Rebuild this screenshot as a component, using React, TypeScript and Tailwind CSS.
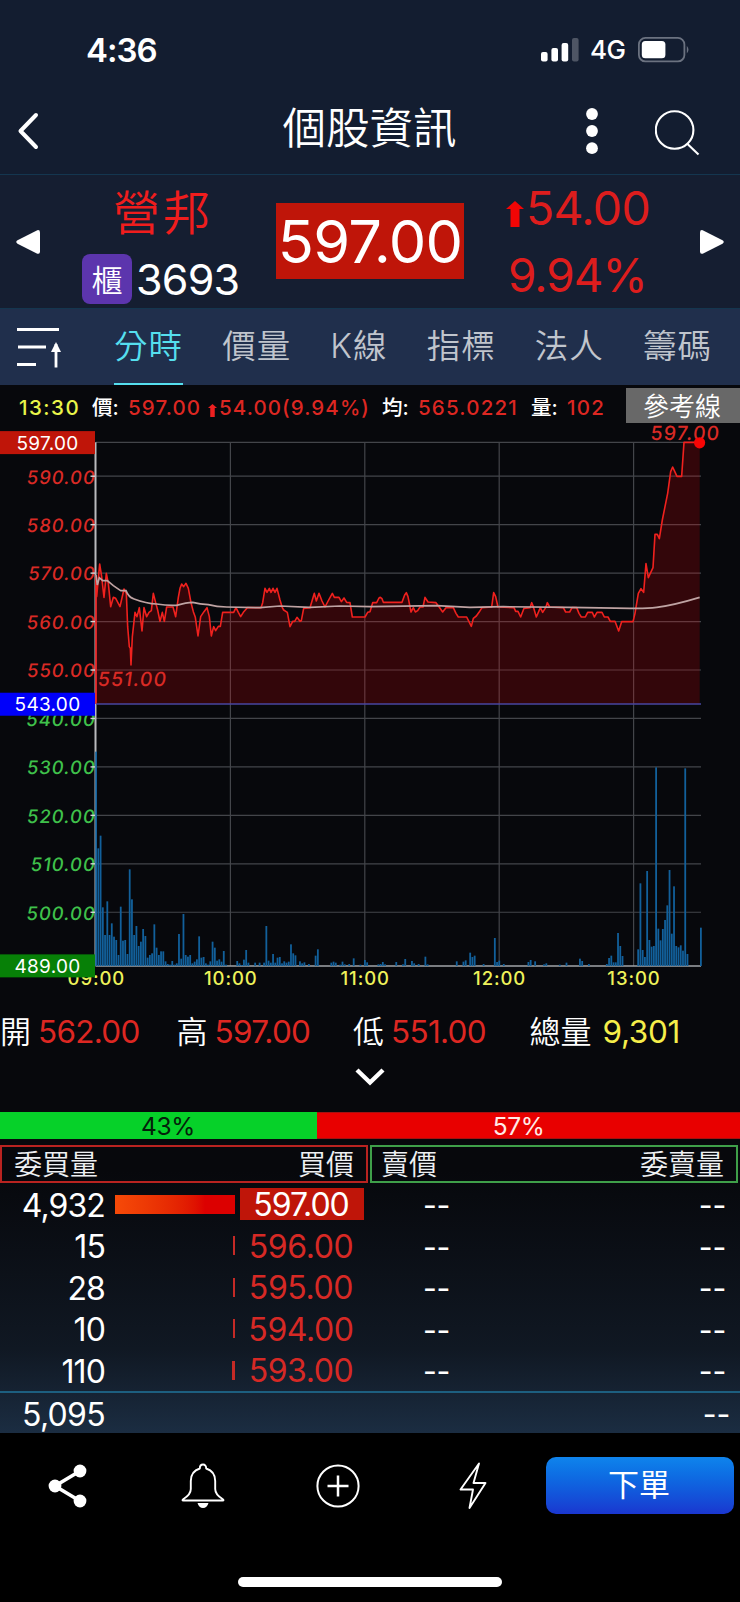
import type { ReactNode } from "react";

const TABS = ["分時", "價量", "K線", "指標", "法人", "籌碼"];

const SUMMARY = [
  { label: "開", value: "562.00", color: "text-[#dd2722] tracking-[-0.7px]" },
  { label: "高", value: "597.00", color: "text-[#dd2722] tracking-[-0.7px]" },
  { label: "低", value: "551.00", color: "text-[#dd2722] tracking-[-0.7px]" },
  { label: "總量", value: "9,301", color: "text-[#f5ee4a] tracking-[-0.3px] pl-1" },
];

const BIDS = [
  { volume: "4,932", price: "597.00", ratio: 100 },
  { volume: "15", price: "596.00", ratio: 2 },
  { volume: "28", price: "595.00", ratio: 2 },
  { volume: "10", price: "594.00", ratio: 2 },
  { volume: "110", price: "593.00", ratio: 2.5 },
];

// plot area
const LEFT = 96;
const RIGHT = 701;
const TOP = 442.3;
const BOTTOM = 966;
const MINUTE = 2.24;

const priceToY = (price: number) => TOP + (597 - price) * 4.845;
const minuteToX = (minute: number) => LEFT + minute * MINUTE;

const UP_LABELS = [590, 580, 570, 560, 550];
const DOWN_LABELS = [540, 530, 520, 510, 500];
const HOURS = ["09:00", "10:00", "11:00", "12:00", "13:00"];

// price and average lines, drawn in thirds of a pixel
const PRICE_POINTS =
  "288,590 290,650 299,552 305,590 312,652 319,580 325,610 332,680 340,652 347,655 360,680 372,627 379,640 383,740 388,800 391,805 393,855 397,770 405,697 411,710 418,683 426,753 432,683 440,710 447,697 454,692 460,640 467,668 473,690 480,724 487,697 493,724 500,681 519,681 527,710 535,652 540,625 545,612 551,620 558,610 565,625 573,668 580,695 586,712 594,768 602,710 612,695 621,683 628,710 634,768 641,740 647,752 655,739 661,739 668,697 701,697 708,683 715,697 722,710 730,697 742,683 783,683 788,668 795,625 801,637 808,625 813,637 819,625 825,637 831,625 840,660 847,683 851,690 862,697 870,740 878,724 884,724 891,712 900,724 904,722 911,685 930,683 943,640 949,663 957,640 966,663 975,681 986,660 997,640 1003,652 1017,652 1024,665 1032,654 1040,667 1050,668 1057,711 1095,711 1103,697 1110,695 1118,668 1130,668 1137,654 1141,652 1146,656 1150,667 1206,667 1214,645 1219,638 1224,650 1233,696 1240,683 1246,696 1253,692 1260,681 1269,681 1275,652 1284,666 1308,668 1318,682 1328,696 1338,683 1360,683 1368,700 1375,711 1400,711 1407,725 1414,739 1420,715 1429,708 1437,697 1446,683 1475,681 1481,638 1487,650 1494,681 1542,683 1547,694 1554,694 1562,711 1572,685 1590,683 1595,668 1600,680 1609,711 1621,683 1628,697 1637,683 1642,668 1649,681 1690,683 1697,696 1709,696 1716,683 1730,683 1737,700 1744,711 1756,711 1763,697 1777,697 1783,711 1791,697 1806,697 1813,711 1824,711 1831,724 1845,724 1856,753 1865,725 1899,725 1905,700 1915,640 1923,626 1931,637 1938,551 1945,593 1959,563 1965,463 1972,463 1978,476 1987,420 2003,340 2012,275 2018,261 2023,272 2031,289 2045,289 2052,187 2099,187";
const AVERAGE_PATH =
  "M288,585 L292,615 L298,593 L308,602 L322,602 L340,617 Q350,624 362,632 L378,632 Q386,652 400,656 Q440,671 470,672 Q500,677 530,676 Q560,667 578,667 Q600,673 625,674 Q650,681 680,681 L780,683 L840,678 L930,682 L1020,678 L1110,680 L1310,677 L1410,682 L1510,680 L1710,682 L1890,685 Q1940,686 1970,682 Q2020,676 2099,652";

// [minute, volume]
const VOLUMES: [number, number][] = [
  [0, 643], [1, 353], [2, 391], [3, 176], [4, 93], [5, 194], [6, 93], [7, 128], [8, 88], [9, 78],
  [10, 33], [11, 178], [12, 76], [13, 78], [14, 36], [15, 290], [16, 200], [17, 93], [18, 120], [19, 60],
  [20, 73], [21, 111], [22, 90], [23, 25], [24, 33], [25, 38], [26, 125], [27, 55], [28, 33], [29, 44],
  [30, 44], [31, 14], [32, 6], [33, 4], [34, 15], [35, 4], [36, 8], [37, 96], [38, 22], [39, 156],
  [40, 33], [41, 28], [42, 33], [43, 8], [44, 13], [45, 20], [46, 89], [47, 25], [48, 27], [49, 8],
  [50, 4], [51, 14], [52, 73], [53, 55], [54, 16], [55, 20], [56, 13], [57, 45], [58, 4], [63, 15],
  [64, 8], [65, 3], [66, 19], [67, 48], [68, 10], [71, 10], [73, 10], [75, 10], [76, 120], [77, 16],
  [78, 10], [79, 36], [80, 10], [81, 25], [82, 27], [83, 8], [84, 14], [85, 10], [86, 13], [87, 65],
  [88, 38], [89, 32], [91, 14], [92, 8], [93, 11], [95, 6], [98, 31], [99, 50], [105, 10], [106, 13],
  [107, 10], [109, 4], [110, 13], [111, 5], [113, 6], [115, 23], [118, 4], [120, 18], [121, 11],
  [126, 5], [127, 6], [128, 12], [129, 5], [134, 12], [137, 5], [138, 21], [141, 15], [142, 8],
  [144, 6], [147, 28], [148, 5], [161, 14], [164, 13], [165, 17], [167, 40], [168, 27], [169, 31],
  [173, 6], [178, 84], [179, 12], [180, 16], [182, 6], [193, 12], [194, 18], [196, 14], [200, 5],
  [201, 8], [207, 4], [210, 10], [216, 22], [217, 15], [220, 6], [228, 6], [229, 24], [230, 31],
  [231, 11], [232, 11], [233, 99], [234, 60], [235, 30], [242, 50], [243, 248], [244, 48], [245, 27],
  [246, 285], [247, 78], [248, 58], [249, 60], [250, 596], [251, 112], [252, 77], [253, 111],
  [254, 138], [255, 182], [256, 288], [257, 97], [258, 239], [259, 60], [260, 56], [261, 62],
  [262, 46], [263, 593], [264, 36], [270, 115],
];

function StatusBar() {
  return (
    <div className="flex h-[88px] items-center pt-3 pr-[48px] pl-[86px] text-white">
      <span className="text-[33px] leading-none font-semibold tracking-[-1px]">4:36</span>
      <div className="ml-auto flex items-center">
        <svg width="38" height="24" viewBox="0 0 38 24" fill="currentColor">
          <rect x="0" y="14" width="6.6" height="9.5" rx="2" />
          <rect x="10.4" y="10" width="6.6" height="13.5" rx="2" />
          <rect x="20.6" y="5" width="6.6" height="18.5" rx="2" />
          <rect x="31" y="0" width="6.6" height="23.5" rx="2" opacity=".25" />
        </svg>
        <span className="ml-[11px] w-[36px] text-[26px] leading-none font-medium tracking-[-0.5px]">
          4G
        </span>
        <svg className="ml-3" width="54" height="26" viewBox="0 0 54 26">
          <rect x=".9" y=".9" width="45.5" height="23.5" rx="6.5" fill="none" stroke="#6b7280" strokeWidth="1.8" />
          <rect x="3.8" y="4" width="23.6" height="17.3" rx="3.5" fill="#fff" />
          <path d="M48.8 8.7q3.4 3.9 0 7.8z" fill="#6b7280" />
        </svg>
      </div>
    </div>
  );
}

function TitleBar() {
  return (
    <div className="flex h-[86px] items-start justify-between pr-[39px] pl-[17px] text-white">
      <svg className="mt-[23px] w-[104px]" height="40" viewBox="0 0 104 40" fill="none">
        <path d="M19 4 L3.5 20 L19 36" stroke="currentColor" strokeWidth="4" strokeLinecap="round" strokeLinejoin="round" />
      </svg>
      <h1 className="ml-[33px] text-[43.5px] leading-[80px] font-[350]">個股資訊</h1>
      <div className="mt-4 flex">
        <svg width="14" height="54" viewBox="0 0 14 54" fill="currentColor">
          <circle cx="7" cy="10" r="5.9" />
          <circle cx="7" cy="27" r="5.9" />
          <circle cx="7" cy="44.2" r="5.9" />
        </svg>
        <svg className="ml-14" width="46" height="54" viewBox="0 0 46 54" fill="none" stroke="currentColor" strokeWidth="2.1">
          <circle cx="19.6" cy="26" r="18.8" />
          <path d="M32.5 40 L43.5 50.5" />
        </svg>
      </div>
    </div>
  );
}

function Quote() {
  return (
    <section className="flex h-[135px] border-y border-[#14364f] bg-[#151e31]">
      <div className="flex w-[80px] items-center pl-[15px]">
        <svg width="26" height="26" viewBox="0 0 26 26" fill="#fff">
          <path d="M22.3 1.2 L2.5 11.3 Q0 13 2.5 14.7 L22.3 24.7 Q25 25.5 25 22.5 V3.5 Q25 .6 22.3 1.2Z" />
        </svg>
      </div>
      <div className="flex w-[196px] flex-col">
        <p className="mt-[13px] pl-[33px] text-[47px] leading-[50px] font-[350] tracking-[3px] text-[#f01d1d]">
          營邦
        </p>
        <div className="mt-[16px] flex items-center pl-0.5">
          <span className="flex size-[50px] items-center justify-center rounded-lg bg-[#5c35ad] pt-0.5 text-[31px] leading-none font-[350] text-white">
            櫃
          </span>
          <span className="ml-1 text-[43px] leading-none tracking-[-0.8px] text-white">3693</span>
        </div>
      </div>
      <div className="mt-[28px] flex h-[76px] w-[188px] items-center justify-center bg-[#bf1509] pt-0.5 text-[59.5px] tracking-[-0.7px] text-white">
        597.00
      </div>
      <div className="flex w-[236px] flex-col pl-[42px] text-[#dd1d1d]">
        <p className="mt-[8px] flex items-center text-[46.5px] leading-[50px] tracking-[-0.7px]">
          <svg className="mt-3 mr-0.5" width="18" height="26" viewBox="0 0 18 26" fill="#f20505">
            <path d="M9 0 L18 8 H13.5 V26 H4.5 V8 H0Z" />
          </svg>
          54.00
        </p>
        <p className="mt-[17px] pl-0.5 text-[46px] leading-[50px] tracking-[-1px]">9.94%</p>
      </div>
      <div className="flex items-center">
        <svg width="26" height="26" viewBox="0 0 26 26" fill="#fff">
          <path d="M2.7 1.2 L22.5 11.3 Q25 13 22.5 14.7 L2.7 24.7 Q0 25.5 0 22.5 V3.5 Q0 .6 2.7 1.2Z" />
        </svg>
      </div>
    </section>
  );
}

function Tabs() {
  return (
    <nav className="flex h-[76px] items-stretch bg-[#202f4c] pr-7 pl-4">
      <svg className="mt-[17px] mr-[53px] shrink-0" width="45" height="46" viewBox="0 0 45 46" fill="none" stroke="#fff" strokeWidth="2.8">
        <path d="M1 3.5 H43 M2 21 H30 M1 38.5 H20 M40 18 V41.5" />
        <path d="M40 16 L45 26 H35Z" fill="#fff" stroke="none" />
      </svg>
      <div className="flex flex-1 justify-between">
        {TABS.map((tab, index) => (
          <button
            key={tab}
            type="button"
            className={`h-full border-b-2 pt-0.5 text-[33.5px] leading-none font-[350] tracking-[1px] ${
              index === 0 ? "border-[#55dfee] text-[#55dfee]" : "border-transparent text-[#c0c5cd]"
            }`}
          >
            {tab}
          </button>
        ))}
      </div>
    </nav>
  );
}

function InfoRow() {
  return (
    <div className="flex h-[38px] items-start pl-[19px] text-[20.5px] leading-none font-medium whitespace-nowrap text-[#dd2722]">
      <span className="w-[73px] pt-[13px] tracking-[1.5px] text-[#e9f54a]">13:30</span>
      <span className="w-9 pt-[13px] text-white">價:</span>
      <span className="w-[80px] pt-[13px] tracking-[1.1px]">597.00</span>
      <svg className="mt-[19px] mr-0.5" width="9" height="13" viewBox="0 0 18 26" fill="#ee2020">
        <path d="M9 0 L18 8 H13.5 V26 H4.5 V8 H0Z" />
      </svg>
      <span className="w-[163px] pt-[13px] tracking-[1.1px]">54.00(9.94%)</span>
      <span className="w-9 pt-[13px] text-white">均:</span>
      <span className="w-[113px] pt-[13px] tracking-[1.2px]">565.0221</span>
      <span className="w-9 pt-[13px] text-white">量:</span>
      <span className="pt-[13px] tracking-[1.2px]">102</span>
      <button type="button" className="mt-[3px] ml-auto h-[35px] w-[114px] bg-[#686868] pt-0.5 pr-0.5 text-[26px] leading-none font-[350] text-white">
        參考線
      </button>
    </div>
  );
}

function PriceTag({ price, fill }: { price: number; fill: string }) {
  const y = priceToY(price);
  return (
    <g>
      <rect x="0" y={y - 11.2} width="95" height="23" fill={fill} />
      <text x="47.5" y={y + 7.5} textAnchor="middle" fill="#fff" className="text-[19px] tracking-[0.3px]">
        {price.toFixed(2)}
      </text>
    </g>
  );
}

function Chart() {
  return (
    <svg className="block" width="740" height="567" viewBox="0 423 740 567">
      <g stroke="#43454a" strokeWidth="1.2">
        <path d={`M${LEFT} ${TOP} H${RIGHT}`} />
        {[...UP_LABELS, ...DOWN_LABELS].map((price) => (
          <path key={price} d={`M${LEFT} ${priceToY(price)} H${RIGHT}`} />
        ))}
        {[60, 120, 180, 240].map((minute) => (
          <path key={minute} d={`M${minuteToX(minute)} ${TOP} V${BOTTOM}`} />
        ))}
      </g>

      <path d={`M95.5 ${TOP} V${BOTTOM}`} stroke="#b9babd" strokeWidth="2" />
      <path d={`M95.5 ${BOTTOM} H${RIGHT}`} stroke="#a2a4a8" strokeWidth="1.6" />
      <path d="M96 575 V704" stroke="#e02626" strokeWidth="1.8" />

      {VOLUMES.map(([minute, volume]) => (
        <rect
          key={minute}
          x={minuteToX(minute) - 0.8}
          y={BOTTOM - volume / 3}
          width="1.8"
          height={volume / 3}
          fill="#12609b"
        />
      ))}

      <g transform="translate(0 380) scale(.33333)" fill="none">
        <path d={`M${PRICE_POINTS} 2099,972 288,972Z`} fill="#ff0008" fillOpacity=".18" />
        <polyline points={PRICE_POINTS} stroke="#f0211e" strokeWidth="4.8" strokeLinejoin="round" />
        <path d={AVERAGE_PATH} stroke="#bfa3a3" strokeWidth="5" />
      </g>
      <path d={`M${LEFT} 704 H${RIGHT}`} stroke="#4846a0" strokeWidth="1.6" />

      {/* skewed by hand, the italic face has narrower figures */}
      <g className="text-[18.5px] font-medium tracking-[0.9px]" textAnchor="end">
        {UP_LABELS.map((price) => (
          <text key={price} transform={`translate(95 ${priceToY(price) + 7.3}) skewX(-8)`} fill="#d92a25">
            {price.toFixed(2)}
          </text>
        ))}
        {DOWN_LABELS.map((price) => (
          <text key={price} transform={`translate(95 ${priceToY(price) + 7.3}) skewX(-8)`} fill="#3fc14b">
            {price.toFixed(2)}
          </text>
        ))}
      </g>
      {[...UP_LABELS, ...DOWN_LABELS].map((price) => (
        <path key={price} d={`M90.5 ${priceToY(price)} H95`} stroke="#d5d5d5" strokeWidth="1.4" />
      ))}

      <g className="text-[18.5px] font-medium tracking-[0.9px]" textAnchor="middle" fill="#eef25a">
        {HOURS.map((hour, index) => (
          <text key={hour} x={minuteToX(index * 60) + 0.4} y="984.5">
            {hour}
          </text>
        ))}
      </g>

      <PriceTag price={597} fill="#bf1509" />
      <PriceTag price={543} fill="#0000fa" />
      <PriceTag price={489} fill="#078007" />

      <g className="text-[19.5px] font-medium tracking-[1.1px]" fill="#d92a25">
        <text transform="translate(97 685.5) skewX(-8)">551.00</text>
        <text transform="translate(650 440) skewX(-5)">597.00</text>
      </g>
      <circle cx="699.6" cy="442.8" r="5.6" fill="#f80505" />
    </svg>
  );
}

function Summary() {
  return (
    <div className="flex h-[122px] flex-col items-center">
      <div className="mt-[23px] flex w-full items-center text-[31.5px] leading-[38px]">
        {SUMMARY.map((item) => (
          <div key={item.label} className="flex w-[176.5px] shrink-0 items-center whitespace-nowrap">
            <span className="mr-[7px] text-[31px] font-[350] text-white">{item.label}</span>
            <span className={item.color}>{item.value}</span>
          </div>
        ))}
      </div>
      <svg className="mt-4" width="32" height="22" viewBox="0 0 32 22" fill="none">
        <path d="M3 3 L16 15.5 L29 3" stroke="#fff" strokeWidth="4.4" />
      </svg>
    </div>
  );
}

function RatioBar() {
  return (
    <div className="flex h-[27px] text-[24.5px] leading-[29px]">
      <div className="w-[317px] bg-[#06d129] pl-[19px] text-center tracking-[-0.4px] text-[#04210a]">43%</div>
      <div className="flex-1 border-y border-[#a51010] bg-[#e80000] pr-[20px] text-center leading-[27px] tracking-[-0.4px] text-[#ffe9e6]">
        57%
      </div>
    </div>
  );
}

function HeadCell({ color, children }: { color: string; children: ReactNode }) {
  return (
    <div className={`flex h-[38px] w-[368px] items-center justify-between border-2 px-3 pt-0.5 text-[28px] leading-none font-[350] text-[#eef0f3] ${color}`}>
      {children}
    </div>
  );
}

function Dashes() {
  return <span className="block text-[30px] leading-none tracking-[-0.2px]">--</span>;
}

function OrderBook() {
  return (
    <section>
      <div className="mt-[6px] flex gap-0.5">
        <HeadCell color="border-[#b92320]">
          <span>委買量</span>
          <span>買價</span>
        </HeadCell>
        <HeadCell color="border-[#3f9f49]">
          <span className="-ml-[3px]">賣價</span>
          <span>委賣量</span>
        </HeadCell>
      </div>
      {BIDS.map((bid, index) => (
        <div key={bid.price} className="flex h-[41.5px] items-center pt-px text-[32px] leading-none text-white">
          <span className="w-[105px] pt-[3px] text-right tracking-[-0.9px]">{bid.volume}</span>
          <div className="ml-2.5 flex h-[19px] w-[120px] justify-end">
            <div
              className={index === 0 ? "bg-linear-to-r from-[#f64a08] to-[#dc0000] to-75%" : "bg-[#c52a26]"}
              style={{ width: `${bid.ratio}%` }}
            />
          </div>
          <span
            className={`ml-[5px] flex h-8 w-[124px] items-center justify-center pt-0.5 pr-0.5 ${
              index === 0 ? "bg-[#bf1509] tracking-[-1px] text-white" : "tracking-[-0.4px] text-[#d62925]"
            }`}
          >
            {bid.price}
          </span>
          <span className="ml-[59px] pt-0.5">
            <Dashes />
          </span>
          <span className="mr-[14px] ml-auto pt-0.5">
            <Dashes />
          </span>
        </div>
      ))}
      <div className="flex h-[41px] items-center border-t-2 border-[#1d5f80] text-[32px] leading-none text-white">
        <span className="w-[105px] pt-[6px] text-right tracking-[-0.7px]">5,095</span>
        <span className="mr-[10px] ml-auto pt-1">
          <Dashes />
        </span>
      </div>
    </section>
  );
}

function BottomBar() {
  return (
    <footer className="flex h-[169px] flex-col bg-black">
      <div className="mt-6 flex h-[57px] items-center pr-1.5">
        <div className="flex w-[546px] items-center text-white">
          <svg className="ml-[46px]" width="44" height="46" viewBox="0 0 44 46" fill="currentColor">
            <path d="M34 8 L9 23 L34 38" fill="none" stroke="currentColor" strokeWidth="3.6" />
            <circle cx="34" cy="8" r="6.4" />
            <circle cx="9" cy="23" r="6.4" />
            <circle cx="34" cy="38" r="6.4" />
          </svg>
          <svg className="ml-[90px]" width="46" height="46" viewBox="0 0 46 46" fill="none" stroke="currentColor" strokeWidth="1.9" strokeLinejoin="round">
            <path d="M23 1.5 C21 1.5 19.8 3 19.8 5.5 C13.5 7.5 10.8 12 10.8 18 V26 C10.8 31 7.5 33.5 3.5 36 Q1.5 37.5 3.5 37.5 H42.5 Q44.5 37.5 42.5 36 C38.5 33.5 35.2 31 35.2 26 V18 C35.2 12 32.5 7.5 26.2 5.5 C26.2 3 25 1.5 23 1.5Z" />
            <path d="M17.5 40 H28.5 Q27 45 23 45 Q19 45 17.5 40Z" fill="currentColor" stroke="none" />
          </svg>
          <svg className="ml-[89px]" width="46" height="46" viewBox="0 0 46 46" fill="none" stroke="currentColor">
            <circle cx="23" cy="23" r="20.6" strokeWidth="2" />
            <path d="M12.5 23 H33.5 M23 12.5 V33.5" strokeWidth="2.5" />
          </svg>
          <svg className="ml-[97px]" width="30" height="50" viewBox="0 0 30 50" fill="none" stroke="currentColor" strokeWidth="1.9" strokeLinejoin="round">
            <path d="M21 2.5 L2.5 28.5 H15 L11.5 47 L27.5 22 H15.5Z" />
          </svg>
        </div>
        <button type="button" className="h-[57px] flex-1 rounded-[10px] bg-linear-to-b from-[#0f84ec] to-[#1a36d0] pr-0.5 pb-0.5 text-[31px] leading-none font-normal text-white">
          下單
        </button>
      </div>
      <div className="mx-auto mt-[63px] h-2.5 w-[264px] rounded-full bg-white" />
    </footer>
  );
}

export default function App() {
  return (
    <div className="flex h-[1602px] w-[740px] flex-col overflow-hidden bg-[#131d30] font-[Inter,'Noto_Sans_CJK_TC',sans-serif]">
      <StatusBar />
      <TitleBar />
      <Quote />
      <Tabs />
      <main className="h-[1048px] bg-linear-to-b from-[#07080c] from-75% via-[#101823] via-92% to-[#1b2d42]">
        <InfoRow />
        <Chart />
        <Summary />
        <RatioBar />
        <OrderBook />
      </main>
      <BottomBar />
    </div>
  );
}
